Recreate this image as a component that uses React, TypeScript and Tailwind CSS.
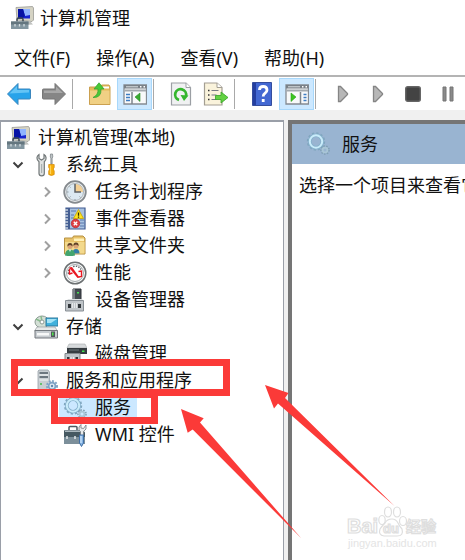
import type { ReactNode } from 'react';

const menus = ['文件(F)', '操作(A)', '查看(V)', '帮助(H)'];

function Cog({ cx, cy, r, color }: { cx: number; cy: number; r: number; color: string }) {
  return (
    <g fill="none" stroke={color}>
      <circle cx={cx} cy={cy} r={r + 1} strokeWidth="2" strokeDasharray="1.8 1.5" />
      <circle cx={cx} cy={cy} r={r - 0.6} strokeWidth="1.8" />
    </g>
  );
}

function ComputerIcon() {
  return (
    <svg width="24" height="24" viewBox="0 0 24 24">
      <path d="M6 1.500 22.500 0.500 23.500 2v12L22 15.500 7 14z" fill="#d5d3c4" stroke="#9a9a96" strokeWidth=".8" />
      <path d="M8 3h12v9.500H8z" fill="#1624cf" />
      <path d="M13 3h7v6l-5 1z" fill="#8fb4ff" />
      <path d="M8 3h5l2 7-3 2.500H8z" fill="#0713a5" />
      <path d="M16 15h4l3 3.500-8 .5z" fill="#c0c2c0" />
      <path d="M7 15.500v-2q0-1.500 1.500-1.500h3q1.500 0 1.500 1.500v2" fill="none" stroke="#3b4854" strokeWidth="1.500" />
      <path d="M1 15.500h17.500V23H1z" fill="#8396a0" />
      <path d="M1 15.500h17.500v3H1z" fill="#64767f" />
      <path d="M5 18v2.500M9.500 18v2.500M14 18v2.500" stroke="#d4dde0" strokeWidth="1.300" />
    </svg>
  );
}

function ToolsIcon() {
  return (
    <svg width="24" height="24" viewBox="0 0 24 24">
      <path d="M5 1.500v4l2.500 1.500L10 5.500v-4c2.500 1.500 3 5 .3 7.200V20.500q0 2.300-2.600 2.300T5 20.500V8.700C2 6.500 2.500 3 5 1.500z" fill="#dfe2e2" stroke="#727879" strokeWidth="1.200" />
      <path d="M7.700 11v9" stroke="#9ea6a7" strokeWidth="1" />
      <path d="M16.500 1h2l.3 3-.7 1v6h-1.200V5l-.6-1z" fill="#bfc5c7" stroke="#81888b" strokeWidth=".8" />
      <path d="M14.700 11.500h5.500v3l-1 1.500 1 2v3.500q-2.700 2-5.500 0V18l1-2-1-1.500z" fill="#f5ae0c" stroke="#d28600" strokeWidth=".7" />
      <path d="M16.500 12.500v8.500" stroke="#ffd35b" strokeWidth="1.200" />
    </svg>
  );
}

function ClockIcon() {
  return (
    <svg width="24" height="24" viewBox="0 0 24 24">
      <circle cx="12" cy="12" r="10.800" fill="#e9edef" stroke="#858a8e" strokeWidth="1.800" />
      <circle cx="12" cy="12" r="8.500" fill="#dce9f2" stroke="#adb4b9" />
      <path d="M12 12V4a8 8 0 0 1 8 8z" fill="#f3cf93" />
      <path d="M12 4v8h6" fill="none" stroke="#5d6266" strokeWidth="1.500" />
      <path d="M12 19v1.500M4 12h1.500M6.500 6.500l1 1M6.500 17.500l1-1M17.500 17.500l-1-1" stroke="#8d979e" />
    </svg>
  );
}

function EventIcon() {
  return (
    <svg width="24" height="24" viewBox="0 0 24 24">
      <path d="M3 1h19v21H3z" fill="#a9c2e0" stroke="#405b91" strokeWidth="1.200" />
      <path d="M3 1h4v21H3z" fill="#455f93" />
      <path d="M2 3h3M2 6h3M2 9h3M2 12h3M2 15h3M2 18h3M2 21h3" stroke="#c8d2df" strokeWidth="1.300" />
      <path d="M8 4h5M8 8h3M8 11h3M17 13h4M17 16h4M17 19h4" stroke="#5979ad" />
      <path d="M15.500 2.500 20.500 11.500h-10z" fill="#ffe51d" stroke="#c7a300" strokeWidth=".8" />
      <path d="M15.500 5.500v3.200M15.500 9.500v1.200" stroke="#302b00" strokeWidth="1.300" />
      <circle cx="12.500" cy="16.500" r="4.200" fill="#de3f42" stroke="#b93137" strokeWidth=".8" />
      <path d="m10.800 14.800 3.400 3.400m0-3.400-3.400 3.400" stroke="#fff" strokeWidth="1.400" />
    </svg>
  );
}

function SharedFolderIcon() {
  return (
    <svg width="24" height="24" viewBox="0 0 24 24">
      <path d="M1.500 4h8l1-2h9.500l2 2v16H1.500z" fill="#e8c268" stroke="#b79243" />
      <path d="M11 4.500h10V7H11z" fill="#fff1b9" />
      <path d="M2 8h19.500v11.500H2z" fill="#f3d98c" />
      <circle cx="7" cy="12.500" r="2.500" fill="#d9a477" />
      <path d="M4.500 12.500q-.5-3.500 2.500-3.500t2.500 3.500q-1-1.500-2.500-1.500t-2.500 1.500z" fill="#604027" />
      <circle cx="13" cy="12" r="2.500" fill="#d9a477" />
      <path d="M10.500 12q-.5-3.500 2.500-3.500t2.500 3.500q-1-1.500-2.500-1.500t-2.500 1.500z" fill="#604027" />
      <path d="M9.500 19.500q0-4.500 3.500-4.500t3.500 4.500z" fill="#337ea7" />
      <path d="M2 21.500q0-6 5-6t5 6q-5 1-10 0z" fill="#43a56e" />
      <path d="m6 15.500 1 2.500 1-2.500z" fill="#fff" />
    </svg>
  );
}

function PerformanceIcon() {
  return (
    <svg width="24" height="24" viewBox="0 0 24 24">
      <circle cx="12" cy="12" r="10.800" fill="#f7f9f9" stroke="#6d7173" strokeWidth="1.500" />
      <circle cx="12" cy="12" r="8.500" fill="#fff" stroke="#a5abad" strokeWidth="1" />
      <path d="M5.500 13q-.5-4 2-6M10 5.500q5-1.500 8 3" fill="none" stroke="#63696c" strokeWidth="1.500" strokeDasharray="1.500 1.200" />
      <path d="m6 6.500 3-.5 7.500 10.500-2 .5z" fill="#ea1822" />
      <path d="M6.500 8v5l3-1M15.500 10.500l3-.5v5.500l-3 .5" fill="none" stroke="#ea1822" strokeWidth="1.400" />
    </svg>
  );
}

function DeviceIcon() {
  return (
    <svg width="24" height="24" viewBox="0 0 24 24">
      <path d="M10 1h8v11h-8z" fill="#454b50" stroke="#2e3338" />
      <path d="M10 1h2v11h-2z" fill="#7d8589" />
      <path d="M14 4h2v1.500h-2z" fill="#46df52" />
      <path d="M5 11h14l2 3H3z" fill="#dde0e1" />
      <path d="M2.500 12.500h18v10.500h-18z" fill="#bfc4c8" stroke="#888f95" />
      <path d="M5 16h3v4H5zM15 16h3v4h-3z" fill="#33383c" />
      <path d="M9.500 15v5M11.500 15v5M13.500 15v5" stroke="#e5e8e9" />
    </svg>
  );
}

function StorageIcon() {
  return (
    <svg width="24" height="24" viewBox="0 0 24 24">
      <ellipse cx="8" cy="7" rx="7" ry="6" fill="#d3dfd5" stroke="#8c9a94" />
      <path d="M8 7 2 4M8 7l-1-6" stroke="#88ba8d" strokeWidth="1.500" />
      <circle cx="8" cy="7" r="2" fill="#fff" stroke="#8c9a94" />
      <path d="M12 3h12v8H12z" fill="#41b1dc" stroke="#2f789c" />
      <path d="M13 4h10l-6 4h-4z" fill="#a3e3f6" />
      <path d="m3 12-2.500 4h23L21 12z" fill="#e7e9e9" stroke="#9a9fa1" strokeWidth=".7" />
      <path d="M1 15.500h22.500V23H1z" fill="#c7ccd0" stroke="#74797e" />
      <path d="M3 18h12v2.500H3z" fill="#f7f8f8" />
      <path d="M17 16.500h4V22h-4z" fill="#52575b" />
      <path d="M18 17.500h1.500v3H18z" fill="#4de64a" />
    </svg>
  );
}

function DiskIcon() {
  return (
    <svg width="24" height="24" viewBox="0 0 24 24">
      <path d="M6 2h16l2 4H4z" fill="#d7dadc" stroke="#a4a9ab" strokeWidth=".6" />
      <path d="M4 6h20v6H4z" fill="#353c40" />
      <path d="M6 8h10" stroke="#6d767a" />
      <path d="M19 8.500h2.500v1.500H19z" fill="#42e34c" />
      <path d="M2 11.500h15V22H2z" fill="#bfc4c8" stroke="#81878b" />
      <path d="M4 15h2.500v4H4zM12.500 15H15v4h-2.500z" fill="#33383c" />
      <path d="M8 15v4M10.500 15v4" stroke="#eef0f1" />
    </svg>
  );
}

function ServerIcon() {
  return (
    <svg width="24" height="24" viewBox="0 0 24 24">
      <path d="M5 1h9l1.500 2v18H4V2z" fill="#c8ced2" stroke="#9aa2a8" strokeWidth=".8" />
      <path d="M5.500 4h8.500M5.500 8h8.500" stroke="#4e5b64" strokeWidth="1.400" />
      <path d="M5.500 6h8.500M5.500 11h8.500" stroke="#f4f6f7" />
      <path d="M6 15h2" stroke="#43bd4b" strokeWidth="1.500" />
      <circle cx="18" cy="17" r="4.500" fill="#dfeaf4" />
      <Cog cx={18} cy={17} r={4} color="#7ea2c4" />
      <circle cx="18" cy="17" r="1.200" fill="#6088b0" />
    </svg>
  );
}

function ServiceIcon() {
  return (
    <svg width="24" height="24" viewBox="0 0 24 24">
      <circle cx="10" cy="9.500" r="8.200" fill="none" stroke="#7fa5bd" strokeWidth="2" strokeDasharray="2.200 2.100" />
      <circle cx="10" cy="9.500" r="6.200" fill="none" stroke="#86b1cc" strokeWidth="3.600" />
      <circle cx="10" cy="9.500" r="6.200" fill="none" stroke="#c9ecfa" strokeWidth="2" />
      <circle cx="19" cy="18" r="4" fill="none" stroke="#7f9fb2" strokeWidth="1.600" strokeDasharray="1.500 1.300" />
      <circle cx="19" cy="18" r="2.400" fill="none" stroke="#a9c6d6" strokeWidth="1.800" />
    </svg>
  );
}

function WmiIcon() {
  return (
    <svg width="24" height="24" viewBox="0 0 24 24">
      <path d="M6 7V4.500q0-1 1-1h6q1 0 1 1V7" fill="none" stroke="#4d5a61" strokeWidth="1.500" />
      <path d="M1 7.500h19l2 2V21H1z" fill="#7c8f9a" />
      <path d="M1 7.500h19l2 2V14H1z" fill="#465962" />
      <path d="M2 8.500h17" stroke="#aab7bd" />
      <path d="M4 13v3M12 13v3" stroke="#e3e9eb" strokeWidth="1.500" />
      <path d="M18 1.500 16 4v3l1.500 1.500v4h3v-4L23 6V2l-2.500 3.500L18 5z" fill="#e7eaeb" stroke="#737b80" strokeWidth=".8" />
      <path d="M16.500 12h4v8l-2 3.500-2-3.500z" fill="#84b3e3" stroke="#416fa4" />
      <path d="M18 13v7" stroke="#e4f3ff" />
    </svg>
  );
}

function ArrowIcon({ forward }: { forward?: boolean }) {
  return (
    <svg width="26" height="24" viewBox="0 0 26 24" className={forward ? 'rotate-180' : ''}>
      <path d="M1.500 12 12 1.500v5.500h11.500q1 0 1 1v8q0 1-1 1H12v5.500z" fill={forward ? '#868686' : '#27a3ea'} stroke={forward ? '#777' : '#3a86bd'} strokeLinejoin="round" />
      <path d={forward ? 'M4 13h19v2.500H11v4z' : 'M3.500 11.500 11 4v4h12v2.500z'} fill={forward ? '#a8a8a8' : '#64c4f5'} />
    </svg>
  );
}

function UpFolderIcon() {
  return (
    <svg width="24" height="24" viewBox="0 0 24 24">
      <path d="M1.500 5H12l1.500-2H21L22 5v17.500H1.500z" fill="#e4b95a" stroke="#cba04f" />
      <path d="M15 4.500h6v2h-6z" fill="#fff" />
      <path d="M2 8.500h19.500V22H2z" fill="#f0d084" />
      <path d="M5 15.500q5.500-2.500 5-8.500H6L11 .8l5 6.200h-3q.5 9-8 8.500z" fill="#48c936" stroke="#3aa435" strokeWidth=".8" />
    </svg>
  );
}

function PaneIcon({ action }: { action?: boolean }) {
  return (
    <svg width="24" height="22" viewBox="0 0 24 22">
      <path d="M1 2h22.500v19H1z" fill="#f8f9fa" stroke="#858b92" strokeWidth="1.300" />
      <path d="M1 2h22.500v3.500H1z" fill="#7a8188" />
      <path d="M3 3.800h12" stroke="#dce1e4" />
      <path d="M17 3.800h1.500M20.500 3.800h1.500" stroke="#fff" strokeWidth="1.500" />
      <path d="M1.500 7.500h21.500" stroke="#a3a9ae" strokeWidth="2" />
      {action ? (
        <>
          <path d="M15.500 9v12" stroke="#7e858b" strokeWidth="1.500" />
          <path d="M18.500 11.500h3M18.500 14.500h3M18.500 17.500h3" stroke="#3d7dc2" strokeWidth="1.500" />
          <path d="m6 10 5 4-5 4.500z" fill="#3bc620" stroke="#2a9e18" strokeWidth=".6" />
        </>
      ) : (
        <>
          <path d="M9 9v12" stroke="#7e858b" strokeWidth="1.500" />
          <path d="M3 11.500h4M3 14.500h4M3 17.500h4" stroke="#3d7dc2" strokeWidth="1.500" />
          <path d="m17 10-5 4 5 4.500z" fill="#3bad31" stroke="#2a8b27" strokeWidth=".6" />
        </>
      )}
    </svg>
  );
}

function RefreshIcon() {
  return (
    <svg width="22" height="24" viewBox="0 0 22 24">
      <path d="M1.500 1H16l4.500 4.500V23h-19z" fill="#f0f1f2" stroke="#9b9fa4" strokeWidth="1.200" />
      <path d="M16 1v4.500h4.500" fill="#fff" stroke="#9b9fa4" />
      <path d="M9 18a5.500 5.500 0 1 1 7-4" fill="none" stroke="#35b62e" strokeWidth="2.800" />
      <path d="m10.500 13 8 .5-4.500 5.500z" fill="#35b62e" />
    </svg>
  );
}

function ExportIcon() {
  return (
    <svg width="26" height="24" viewBox="0 0 26 24">
      <path d="M1.500 1H14l5 4.500V23H1.500z" fill="#faf3dc" stroke="#a39e93" strokeWidth="1.200" />
      <path d="M14 1v4.500h5" fill="#fff" stroke="#a39e93" />
      <path d="M5 8.500h1.500M5 13h1.500M5 17.500h1.500" stroke="#333" strokeWidth="1.500" />
      <path d="M8.500 8.500h7M8.500 13h5M8.500 17.500h5" stroke="#777b84" strokeWidth="1.200" />
      <path d="M12.500 13.500H18V10l7 5.500-7 5.500v-3.500h-5.500z" fill="#63d142" stroke="#32a323" strokeWidth=".8" />
    </svg>
  );
}

function HelpIcon() {
  return (
    <svg width="20" height="24" viewBox="0 0 20 24">
      <path d="M.5.5h19v23H.5z" fill="#4368d2" stroke="#354d9d" />
      <path d="M1 1h3v22H1z" fill="#243ea0" />
      <path d="M7.500 8q0-3.500 3.700-3.500T15 8q0 2-2 3.200-1.800 1.100-1.800 3.300" fill="none" stroke="#fff" strokeWidth="2.800" />
      <path d="M9.800 17h2.800v3H9.800z" fill="#fff" />
    </svg>
  );
}

function PlayIcon() {
  return (
    <svg width="12" height="18" viewBox="0 0 12 18">
      <path d="M1.500 1.500h2L10.500 8.500v1L3.500 16.500h-2z" fill="#b7b7b7" stroke="#858585" strokeWidth="1.300" />
    </svg>
  );
}

function StopIcon() {
  return (
    <svg width="16" height="16" viewBox="0 0 16 16">
      <rect x=".7" y=".7" width="14.600" height="14.600" rx="2" fill="#434343" stroke="#666" strokeWidth="1.400" />
    </svg>
  );
}

function PauseIcon() {
  return (
    <svg width="12" height="16" viewBox="0 0 12 16">
      <path d="M1 1h3v14H1zM8 1h3v14H8z" fill="#8a8a8a" stroke="#747474" />
    </svg>
  );
}

function ToolButton({ label, active, children }: { label: string; active?: boolean; children: ReactNode }) {
  return (
    <button
      type="button"
      aria-label={label}
      className={`flex h-8 w-[35px] shrink-0 items-center justify-center ${active ? 'bg-[#cce8ff] ring-1 ring-inset ring-[#a8d8fb]' : ''}`}
    >
      {children}
    </button>
  );
}

function Divider() {
  return <div className="ml-px mr-[9px] h-[30px] w-px shrink-0 bg-[#a9a9a9]" />;
}

function Chevron({ open }: { open: boolean }) {
  return open ? (
    <svg width="12" height="12" viewBox="0 0 12 12" fill="none" stroke="#3f3f3f" strokeWidth="2">
      <path d="m1.500 3.500 4.500 4.500 4.500-4.500" />
    </svg>
  ) : (
    <svg width="12" height="12" viewBox="0 0 12 12" fill="none" stroke="#a0a0a0" strokeWidth="2">
      <path d="M4 1.500 8.500 6 4 10.500" />
    </svg>
  );
}

type Node = {
  label: string;
  icon: ReactNode;
  state?: 'open' | 'closed';
  selected?: boolean;
  children?: Node[];
};

const tree: Node[] = [
  {
    label: '系统工具',
    icon: <ToolsIcon />,
    state: 'open',
    children: [
      { label: '任务计划程序', icon: <ClockIcon />, state: 'closed' },
      { label: '事件查看器', icon: <EventIcon />, state: 'closed' },
      { label: '共享文件夹', icon: <SharedFolderIcon />, state: 'closed' },
      { label: '性能', icon: <PerformanceIcon />, state: 'closed' },
      { label: '设备管理器', icon: <DeviceIcon /> },
    ],
  },
  {
    label: '存储',
    icon: <StorageIcon />,
    state: 'open',
    children: [{ label: '磁盘管理', icon: <DiskIcon /> }],
  },
  {
    label: '服务和应用程序',
    icon: <ServerIcon />,
    state: 'open',
    children: [
      { label: '服务', icon: <ServiceIcon />, selected: true },
      { label: 'WMI 控件', icon: <WmiIcon /> },
    ],
  },
];

function TreeItem({ node }: { node: Node }) {
  return (
    <li>
      <div className="flex h-[27px] items-center">
        <div className="flex w-6 shrink-0 justify-center">
          {node.state && (
            <button type="button" aria-label={`展开 ${node.label}`}>
              <Chevron open={node.state === 'open'} />
            </button>
          )}
        </div>
        <button
          type="button"
          className={`flex h-full items-center gap-2 whitespace-nowrap pl-1 pr-[6px] ${node.selected ? 'bg-[#cce8ff]' : ''}`}
        >
          {node.icon}
          {node.label}
        </button>
      </div>
      {node.children && (
        <ul className="pl-[29px]">
          {node.children.map((child) => (
            <TreeItem key={child.label} node={child} />
          ))}
        </ul>
      )}
    </li>
  );
}

function Watermark() {
  return (
    <svg width="96" height="46" viewBox="0 0 96 46" className="absolute left-[346px] top-[504px]">
      <g fill="#fff" stroke="#dedede" strokeWidth="1.200">
        <text x="1" y="29" fontFamily="Liberation Sans, sans-serif" fontWeight="700" fontSize="20">Bai</text>
        <ellipse cx="36" cy="16" rx="3.200" ry="4.500" />
        <ellipse cx="42" cy="8" rx="3.500" ry="5" />
        <ellipse cx="51" cy="8" rx="3.500" ry="5" />
        <ellipse cx="57" cy="17" rx="3.500" ry="4.500" />
        <path d="M46 15q4 0 6 4t4 6q2 7-5 7H38q-6-1-4-7 2-3 5-6 2-4 7-4z" />
        <text x="37" y="29" fontFamily="Liberation Sans, sans-serif" fontWeight="700" fontSize="13">du</text>
        <text x="60" y="28" fontFamily="Noto Sans CJK SC, sans-serif" fontWeight="700" fontSize="15">经验</text>
      </g>
      <text x="2" y="43" fill="#e4e4e4" fontFamily="Liberation Sans, sans-serif" fontSize="11">jingyan.baidu.com</text>
    </svg>
  );
}

export default function App() {
  return (
    <div className="relative flex min-h-screen flex-col overflow-hidden bg-white font-['Noto_Sans','Noto_Sans_CJK_SC',sans-serif] text-lg leading-[27px] text-[#111]">
      <header className="flex h-9 items-center gap-[6px] pl-[10px]">
        <ComputerIcon />
        <h1>计算机管理</h1>
      </header>

      <nav className="flex h-[39px] items-center gap-[26px] pl-[14px] pt-[6px]">
        {menus.map((menu) => (
          <button key={menu} type="button" className="whitespace-nowrap">
            {menu}
          </button>
        ))}
      </nav>

      <div className="flex h-[35px] items-center border-t-2 border-[#b4b4b4] pl-px pt-px">
        <ToolButton label="后退"><ArrowIcon /></ToolButton>
        <ToolButton label="前进"><ArrowIcon forward /></ToolButton>
        <Divider />
        <ToolButton label="上一级"><UpFolderIcon /></ToolButton>
        <ToolButton label="显示控制台树" active><PaneIcon /></ToolButton>
        <Divider />
        <ToolButton label="刷新"><RefreshIcon /></ToolButton>
        <ToolButton label="导出列表"><ExportIcon /></ToolButton>
        <Divider />
        <ToolButton label="帮助"><HelpIcon /></ToolButton>
        <ToolButton label="显示操作窗格" active><PaneIcon action /></ToolButton>
        <Divider />
        <ToolButton label="启动"><PlayIcon /></ToolButton>
        <ToolButton label="继续"><PlayIcon /></ToolButton>
        <ToolButton label="停止"><StopIcon /></ToolButton>
        <ToolButton label="暂停"><PauseIcon /></ToolButton>
      </div>

      <main className="flex flex-1 gap-1 bg-[#f0f0f0] pt-[10px]">
        <aside className="w-[284px] shrink-0 border-x border-t-2 border-[#9a9fa8] bg-white px-[5px] pt-[2px]">
          <button type="button" className="flex h-[27px] items-center gap-2 whitespace-nowrap">
            <ComputerIcon />
            计算机管理(本地)
          </button>
          <ul>
            {tree.map((node) => (
              <TreeItem key={node.label} node={node} />
            ))}
          </ul>
        </aside>

        <section className="min-w-0 flex-1 overflow-hidden border-l-4 border-t-4 border-[#757575] bg-white">
          <div className="flex h-10 items-center gap-3 bg-[#99b4d1] pl-[14px]">
            <ServiceIcon />
            <h2>服务</h2>
          </div>
          <p className="whitespace-nowrap pl-[7px] pt-2">选择一个项目来查看它的描述。</p>
        </section>
      </main>

      {/* Callouts drawn on top of the window */}
      <div className="pointer-events-none absolute left-[11px] top-[359px] h-[37px] w-[219px] border-[7px] border-[#fb3a38]" />
      <div className="pointer-events-none absolute left-[51px] top-[391px] h-[33px] w-[107px] border-[7px] border-[#fb3a38]" />
      <svg width="220" height="160" viewBox="180 380 220 160" fill="#fb3a38" className="pointer-events-none absolute left-[180px] top-[380px]">
        <path d="M265 385 288.500 393 285 398 394.500 506 278 403.500 274 408.500z" />
        <path d="M181 409 203.700 418.300 200 422.500 301 538 192.700 429.500 187.700 432.700z" />
      </svg>
      <Watermark />
    </div>
  );
}
